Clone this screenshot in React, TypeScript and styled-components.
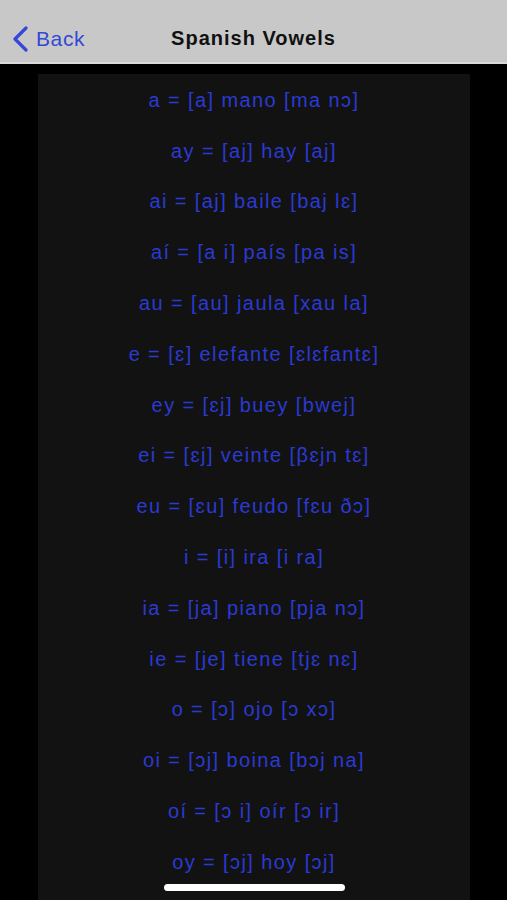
import React from "react";
import styled, { createGlobalStyle } from "styled-components";

const GlobalStyle = createGlobalStyle`
    html, body {
        margin: 0;
        padding: 0;
        background: #000;
    }
    body {
        font-family: "Liberation Sans", Arial, sans-serif;
    }
`;

const Screen = styled.div`
    width: 507px;
    height: 900px;
    background: #000;
    display: flex;
    flex-direction: column;
    overflow: hidden;
    position: relative;
`;

const NavBar = styled.header`
    height: 64px;
    flex-shrink: 0;
    background: #c8c8c8;
    border-bottom: 2px solid #d9d9d9;
    display: grid;
    grid-template-columns: 1fr auto 1fr;
    align-items: center;
    padding-top: 15px;
    box-sizing: border-box;
`;

const BackButton = styled.button`
    display: flex;
    align-items: center;
    gap: 7px;
    background: none;
    border: none;
    padding: 0 0 0 12px;
    color: #3448d6;
    font-family: "Liberation Sans", Arial, sans-serif;
    font-size: 21px;
    letter-spacing: 0.6px;
    cursor: pointer;
    justify-self: start;
`;

const Title = styled.h1`
    margin: 0;
    font-size: 20px;
    font-weight: 700;
    letter-spacing: 1px;
    color: #111;
    font-family: "Liberation Sans", Arial, sans-serif;
`;

const Body = styled.main`
    flex: 1;
    padding: 10px 37px 0 38px;
    display: flex;
`;

const Panel = styled.section`
    flex: 1;
    background: #121212;
    display: flex;
    flex-direction: column;
    align-items: center;
    padding-top: 1px;
`;

const Row = styled.div`
    height: 50.8px;
    display: flex;
    align-items: center;
    justify-content: center;
    color: #2a3ad2;
    font-size: 20px;
    letter-spacing: 1.4px;
    white-space: nowrap;
`;

const HomeIndicator = styled.div`
    position: absolute;
    left: 164px;
    bottom: 9px;
    width: 181px;
    height: 7px;
    border-radius: 4px;
    background: #fff;
`;

const vowels = [
    "a = [a] mano [ma nɔ]",
    "ay = [aj] hay [aj]",
    "ai = [aj] baile [baj lɛ]",
    "aí = [a i] país [pa is]",
    "au = [au] jaula [xau la]",
    "e = [ɛ] elefante [ɛlɛfantɛ]",
    "ey = [ɛj] buey [bwej]",
    "ei = [ɛj] veinte [βɛjn tɛ]",
    "eu = [ɛu] feudo [fɛu ðɔ]",
    "i = [i] ira [i ra]",
    "ia = [ja] piano [pja nɔ]",
    "ie = [je] tiene [tjɛ nɛ]",
    "o = [ɔ] ojo [ɔ xɔ]",
    "oi = [ɔj] boina [bɔj na]",
    "oí = [ɔ i] oír [ɔ ir]",
    "oy = [ɔj] hoy [ɔj]",
];

const App = () => {
    return (
        <Screen>
            <GlobalStyle />
            <NavBar>
                <BackButton>
                    <svg width="17" height="26" viewBox="0 0 17 26">
                        <path
                            d="M14 2 L3 13 L14 24"
                            fill="none"
                            stroke="#3448d6"
                            strokeWidth="3.2"
                            strokeLinecap="round"
                            strokeLinejoin="round"
                        />
                    </svg>
                    Back
                </BackButton>
                <Title>Spanish Vowels</Title>
                <div />
            </NavBar>
            <Body>
                <Panel>
                    {vowels.map((v) => (
                        <Row key={v}>{v}</Row>
                    ))}
                </Panel>
            </Body>
            <HomeIndicator />
        </Screen>
    );
};

export default App;
